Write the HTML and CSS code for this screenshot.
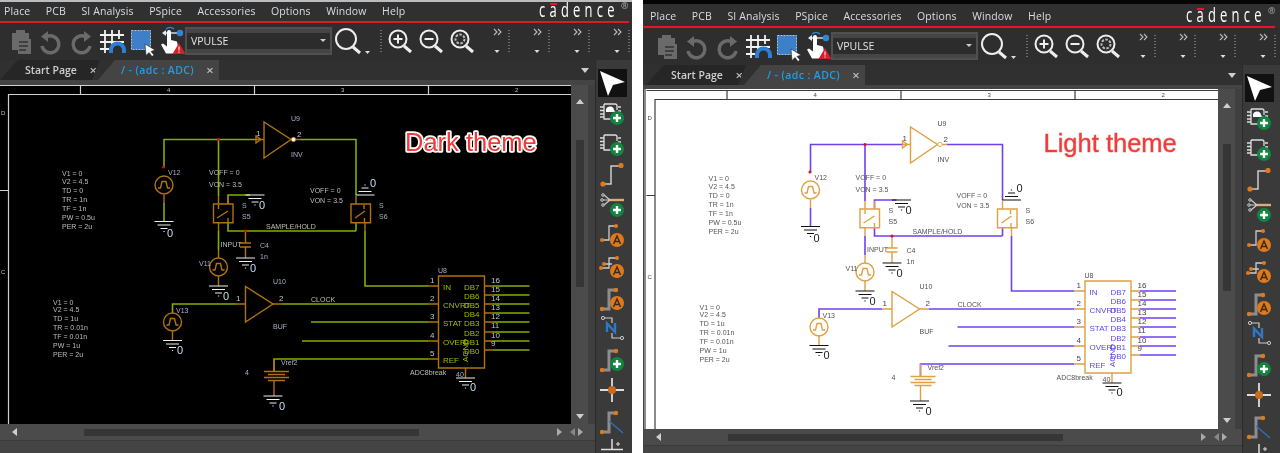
FILE: index.html
```html
<!DOCTYPE html>
<html lang="en">
<head>
<meta charset="utf-8">
<title>Cadence themes</title>
<link rel="stylesheet" href="styles.css">
</head>
<body>
<svg class="sprite" aria-hidden="true">
  <defs>
    <symbol id="i-clip" viewBox="0 0 30 37"><path class="ic-off" d="M6 10h4v-3h9v3h4v6h2v15h-13v-4h-6z"/><path d="M13 19h9M13 23h9M13 27h7" stroke="#333" stroke-width="1.600" fill="none"/></symbol>
    <symbol id="i-undo" viewBox="0 0 30 37"><path d="M11 13.500A8.500 8.500 0 1 1 6 23" class="ic-stroke"/><path class="ic-off" d="M12 8v11l-7-5.500z"/></symbol>
    <symbol id="i-redo" viewBox="0 0 30 37"><path d="M19 13.500A8.500 8.500 0 1 0 24 23" class="ic-stroke"/><path class="ic-off" d="M18 8v11l7-5.500z"/></symbol>
    <symbol id="i-grid" viewBox="0 0 30 37"><path d="M9 7v23M16 7v23M23 7v9M4 12h24M4 19h24M4 26h9" stroke="#f2f2f2" stroke-width="1.800" fill="none"/><path d="M15 30v-3a6.500 6.500 0 0 1 13 0v3" stroke="#2b7fd4" stroke-width="4" fill="none"/></symbol>
    <symbol id="i-sel" viewBox="0 0 30 37"><rect x="5.500" y="7.500" width="19" height="19" fill="#3d7fc9" stroke="#a9c9ea" stroke-dasharray="2 1"/><path d="M19 21l10 6-4 1.500 3 3.500-2 1.500-3-4-3 3z" fill="#fff" stroke="#222" stroke-width=".6"/></symbol>
    <symbol id="i-hand" viewBox="0 0 30 37"><path d="M8 10h14" stroke="#cfd8e0" stroke-width="1.500"/><path d="M6 10l4-3v6z" fill="#e6ebf0"/><circle cx="24" cy="10" r="3.200" fill="#2f86d8"/><path d="M10 6a6 6 0 0 1 8 0" stroke="#2f86d8" fill="none" stroke-width="1.300"/><path d="M11 9a2 2 0 0 1 4 0v8l6 1.500 1 5-3 7H10l-5-9 2-1 4 3z" fill="#fff"/><path d="M23 20l6.500 11h-13z" fill="#d81f2a"/><path d="M23 23.500v4M23 28.500v1.200" stroke="#fff"/></symbol>
    <symbol id="i-zoom" viewBox="0 0 52 37"><circle cx="14" cy="16" r="10" class="ic-lens"/><path d="M21 24l7 6" class="ic-handle"/><path d="M33 28h5l-2.500 3z" fill="#ddd"/><path d="M49 7v24" class="ic-grip"/></symbol>
    <symbol id="i-zin" viewBox="0 0 31 37"><circle cx="14" cy="16" r="8.500" class="ic-lens"/><path d="M20 23l7 6" class="ic-handle"/><path d="M9.500 16h9M14 11.500v9" stroke="#eee" stroke-width="2"/></symbol>
    <symbol id="i-zout" viewBox="0 0 31 37"><circle cx="14" cy="16" r="8.500" class="ic-lens"/><path d="M20 23l7 6" class="ic-handle"/><path d="M9.500 16h9" stroke="#eee" stroke-width="2"/></symbol>
    <symbol id="i-zfit" viewBox="0 0 31 37"><circle cx="14" cy="16" r="8.500" class="ic-lens"/><path d="M20 23l7 6" class="ic-handle"/><circle cx="14" cy="16" r="4.500" fill="none" stroke="#bbb" stroke-width="2" stroke-dasharray="2.500 1.500"/></symbol>
    <symbol id="i-more" viewBox="0 0 40 37"><path d="M17 6l3 3-3 3M21 6l3 3-3 3" fill="none" stroke="#bbb" stroke-width="1.100"/><path d="M17.500 27h5l-2.500 3z" fill="#ddd"/><path d="M32 7v24" class="ic-grip"/></symbol>

    <g id="plus"><circle r="7" fill="#11853f"/><path d="M-4 0h8M0-4v8" stroke="#fff" stroke-width="2.400"/></g>
    <g id="aa"><circle r="7" fill="#df7a1c"/><path d="M-3.500 4L0-4l3.500 8M-2.200 1.500h4.400" stroke="#3a2a16" stroke-width="1.500" fill="none"/></g>
    <g id="chip"><path d="M6 3h11q2 0 2 2v4M6 3v15h7" fill="none" stroke="#ddd" stroke-width="1.300"/><path d="M2 6h4M2 9.500h4M2 13h4M2 16h4M20 6h3M20 10h3" stroke="#ddd" stroke-width="1.500"/></g>
    <g id="bus"><path d="M4 23h7V4h6" fill="none" stroke="#8d8d8d" stroke-width="3"/><circle cx="4" cy="23" r="2.200" fill="#df7a1c"/><circle cx="18" cy="4" r="2.200" fill="#df7a1c"/></g>

    <symbol id="p-part" viewBox="0 0 30 31"><use href="#chip"/><path d="M8 10a4 4 0 0 1 8-1l2 2H8z" fill="#fff"/><use href="#plus" x="19" y="17"/></symbol>
    <symbol id="p-chip" viewBox="0 0 30 31"><use href="#chip"/><use href="#plus" x="19" y="17"/></symbol>
    <symbol id="p-wire" viewBox="0 0 30 31"><path d="M5 21h8V3h10" fill="none" stroke="#ccc" stroke-width="1.500"/><circle cx="5" cy="21" r="2.600" fill="#df7a1c"/><circle cx="23" cy="2.500" r="2.600" fill="#df7a1c"/></symbol>
    <symbol id="p-entry" viewBox="0 0 30 31"><path d="M12 7h14" stroke="#d8ad78" stroke-width="2.400"/><path d="M12 7L6 2M12 7H5M12 7l-6 5" stroke="#ccc" stroke-width="1.200"/><circle cx="5" cy="2" r="1.300" fill="none" stroke="#ccc"/><circle cx="4" cy="7" r="1.300" fill="none" stroke="#ccc"/><circle cx="5" cy="12" r="1.300" fill="none" stroke="#ccc"/><use href="#plus" x="19" y="17"/></symbol>
    <symbol id="p-net" viewBox="0 0 30 31"><path d="M4 16h7V2h7" fill="none" stroke="#ccc" stroke-width="1.300"/><circle cx="4" cy="16" r="2" fill="#df7a1c"/><circle cx="18" cy="2" r="2" fill="#df7a1c"/><use href="#aa" x="19" y="16"/></symbol>
    <symbol id="p-multi" viewBox="0 0 30 31"><path d="M3 13h8V3h8M6 9h8" fill="none" stroke="#ccc" stroke-width="1.300"/><circle cx="3" cy="13" r="2" fill="#df7a1c"/><circle cx="6" cy="9" r="2" fill="#df7a1c"/><circle cx="19" cy="3" r="2" fill="#df7a1c"/><use href="#aa" x="19" y="16"/></symbol>
    <symbol id="p-busa" viewBox="0 0 30 31"><use href="#bus"/><use href="#aa" x="19" y="17"/></symbol>
    <symbol id="p-name" viewBox="0 0 30 31"><path d="M6 2h8v5M14 17v5h8" fill="none" stroke="#ccc" stroke-width="1.200"/><circle cx="5" cy="2" r="1.600" fill="none" stroke="#ccc"/><circle cx="24" cy="22" r="1.600" fill="none" stroke="#ccc"/><path d="M9 16V7.500l8 8.500V7" fill="none" stroke="#2f78c8" stroke-width="2.400"/></symbol>
    <symbol id="p-busplus" viewBox="0 0 30 31"><use href="#bus"/><use href="#plus" x="19" y="17"/></symbol>
    <symbol id="p-junction" viewBox="0 0 30 31"><path d="M2 12h24M14 0v24" stroke="#ddd" stroke-width="1.800"/><circle cx="14" cy="12" r="4" fill="#c96c1d"/></symbol>
    <symbol id="p-busline" viewBox="0 0 30 31"><use href="#bus"/><path d="M11 12l14 12" stroke="#2f6fb8" stroke-width="1.400"/></symbol>
    <symbol id="p-gnd" viewBox="0 0 30 31"><path d="M14 0v10M3 10.500h22" stroke="#ddd" stroke-width="1.500"/><path d="M18 5h4M20 3v4" stroke="#ddd"/></symbol>

    <g id="gnd"><path d="M-9.500 0h19M-6.500 3.500h13M-3.500 7h7M-.6 10h1.200" class="s-gnd"/></g>
    <g id="src"><circle r="9" class="s-part"/><path d="M-6 3h2.500l1.500-6.500h4L3.500 3H6" class="s-part"/></g>

    <g id="art">
      <path d="M-1.500 80V424M0 85.500H600M8 94.500H600M8.500 94V424M0 190.500H8M80.500 85V94M254.500 85V94M428.500 85V94" class="s-rule"/>
      <path d="M164 167V139.500H256M218.500 139.500V196M300 139.500H356V195M228 204V195H250M228 222V231H356M356 222V231M218.500 231V250M164 203V221M365 231V286H428M172.500 313V304H236M282 304H428M311 322H428M302 341H428M274 371V359H428M493 286H529.500M493 295H529.500M493 304H529.500M493 313H529.500M493 322H529.500M493 332H529.500M493 341H529.500M493 350H529.500" class="s-wire"/>
      <path d="M264 122V158L291 139.500zM245.500 286.500V322L273 304zM213.500 204H233V222.700H213.500zM351 204H370.500V222.700H351zM438.500 276H484.500V368H438.500z" class="s-part"/>
      <path d="M256 139.500H264M291 139.500H300M218.500 196V204M228 196V204M218.500 222V231M356 196V204M365 222V231M164 195V203M172.500 331V340M236 304H245.500M273 304H282M218.500 250V258M218.500 276V286M245.500 231V243M245.500 247V258M240 243H251M240 247H251M428 286H438.500M428 304H438.500M428 322H438.500M428 341H438.500M428 359H438.500M484.500 286H493M484.500 295H493M484.500 304H493M484.500 313H493M484.500 322H493M484.500 332H493M484.500 341H493M484.500 350H493M465.500 368V378M274 359V371M264 371.500H289M268 374.500H285M264 377.500H289M268 380.500H285M274 381V396M218.500 209V205M217 218L228 211M228 222V218M364 209V205M355 218L365 211M364.500 218V222M256 136V143L261 139.500z" class="s-part"/>
      <use href="#src" x="164" y="185"/><use href="#src" x="218.500" y="267"/><use href="#src" x="172.500" y="322"/>
      <use href="#gnd" x="164" y="221.500"/><use href="#gnd" x="255" y="195"/><use href="#gnd" x="245.500" y="258"/><use href="#gnd" x="218.500" y="286"/><use href="#gnd" x="172.500" y="340.500"/><use href="#gnd" x="273" y="396"/><use href="#gnd" x="465.500" y="378"/>
      <use href="#gnd" transform="translate(365 195) scale(1 -1)"/>
      <circle cx="163.500" cy="167" r="1.500" class="s-dot"/><circle cx="218.500" cy="139.500" r="1.500" class="s-dot"/><circle cx="245.500" cy="231" r="1.500" class="s-dot"/>
      <circle cx="293.500" cy="139.500" r="2.200" class="s-bubble"/>
    </g>
  </defs>
</svg>

<section class="win dark">
  <nav class="menubar">
    <span>Place</span><span>PCB</span><span>SI Analysis</span><span>PSpice</span><span>Accessories</span><span>Options</span><span>Window</span><span>Help</span>
    <div class="logo"><svg class="logo-art" viewBox="0 0 90 22"><text class="logo-word" transform="scale(.65 1)" x="0" y="17">cadence</text><text class="logo-reg" x="82" y="9">®</text></svg></div>
  </nav>
  <div class="redline"></div>
  <div class="toolbar">
    <svg class="tb tb-30"><use href="#i-clip"/></svg><svg class="tb tb-30"><use href="#i-undo"/></svg><svg class="tb tb-30"><use href="#i-redo"/></svg><svg class="tb tb-30"><use href="#i-grid"/></svg><svg class="tb tb-30"><use href="#i-sel"/></svg><svg class="tb tb-30"><use href="#i-hand"/></svg>
    <div class="combo">VPULSE</div>
    <svg class="tb tb-52"><use href="#i-zoom"/></svg><svg class="tb tb-31"><use href="#i-zin"/></svg><svg class="tb tb-31"><use href="#i-zout"/></svg><svg class="tb tb-31"><use href="#i-zfit"/></svg>
    <svg class="tb tb-40"><use href="#i-more"/></svg><svg class="tb tb-40"><use href="#i-more"/></svg><svg class="tb tb-40"><use href="#i-more"/></svg><svg class="tb tb-40"><use href="#i-more"/></svg>
  </div>
  <div class="body">
    <div class="workspace">
      <div class="tabs">
        <div class="tab tab-off"><span>Start Page</span><b class="tab-x">×</b></div>
        <div class="tab tab-on"><span>/ - (adc : ADC)</span><b class="tab-x">×</b></div>
        <i class="tri tri-d tabs-menu"></i>
      </div>
      <div class="canvas-row">
        <svg class="canvas" viewBox="0 85 571 339">
          <use href="#art"/>
          <g class="t-rule"><text x="167" y="92">4</text><text x="341" y="92">3</text><text x="515" y="92">2</text><text x="1" y="115">D</text><text x="1" y="274">C</text></g>
          <g class="t-note"><text x="62" y="176">V1 = 0</text><text x="62" y="184">V2 = 4.5</text><text x="62" y="193">TD = 0</text><text x="62" y="202">TR = 1n</text><text x="62" y="211">TF = 1n</text><text x="62" y="220">PW = 0.5u</text><text x="62" y="229">PER = 2u</text><text x="53" y="305">V1 = 0</text><text x="53" y="312">V2 = 4.5</text><text x="53" y="321">TD = 1u</text><text x="53" y="330">TR = 0.01n</text><text x="53" y="339">TF = 0.01n</text><text x="53" y="348">PW = 1u</text><text x="53" y="357">PER = 2u</text><text x="209" y="175">VOFF = 0</text><text x="209" y="187">VON = 3.5</text><text x="310" y="193">VOFF = 0</text><text x="310" y="203">VON = 3.5</text><text x="266" y="229">SAMPLE/HOLD</text><text x="220.500" y="247">INPUT</text><text x="311" y="302">CLOCK</text><text x="410" y="375">ADC8break</text></g>
          <g class="t-ref"><text x="291" y="121">U9</text><text x="291" y="157">INV</text><text x="168" y="175">V12</text><text x="199" y="266">V11</text><text x="176" y="313">V13</text><text x="242" y="208">S</text><text x="242" y="219">S5</text><text x="379" y="208">S</text><text x="379" y="219">S6</text><text x="260" y="248">C4</text><text x="260" y="259">1n</text><text x="273" y="284">U10</text><text x="273" y="329">BUF</text><text x="281" y="365">Vref2</text><text x="245" y="375">4</text><text x="438" y="273">U8</text><text x="456" y="377">40</text></g>
          <g class="t-pin"><text x="256" y="136">1</text><text x="297" y="137">2</text><text x="236" y="301">1</text><text x="279" y="301">2</text><text x="430" y="283">1</text><text x="430" y="301">2</text><text x="430" y="319">3</text><text x="430" y="338">4</text><text x="430" y="356">5</text><text x="491" y="283">16</text><text x="491" y="292">15</text><text x="491" y="301">14</text><text x="491" y="310">13</text><text x="491" y="319">12</text><text x="491" y="328">11</text><text x="491" y="338">10</text><text x="491" y="346">9</text></g>
          <g class="t-zero"><text x="167" y="237">0</text><text x="259" y="209">0</text><text x="250" y="272">0</text><text x="223" y="300">0</text><text x="177" y="354">0</text><text x="279" y="410">0</text><text x="370" y="187">0</text><text x="470" y="391">0</text></g>
          <g class="t-port"><text x="443" y="290">IN</text><text x="443" y="308">CNVRT</text><text x="443" y="326">STAT</text><text x="443" y="345">OVER</text><text x="443" y="363">REF</text><text x="464" y="290">DB7</text><text x="464" y="299">DB6</text><text x="464" y="308">DB5</text><text x="464" y="317">DB4</text><text x="464" y="326">DB3</text><text x="464" y="336">DB2</text><text x="464" y="345">DB1</text><text x="464" y="354">DB0</text><text transform="translate(468 362) rotate(-90)">AGND</text></g>
          <text class="t-theme" x="405" y="151">Dark theme</text>
        </svg>
        <div class="vscroll"><i class="tri tri-u"></i><div class="vtrack"></div><i class="tri tri-d vdown"></i></div>
      </div>
      <div class="hscroll"><i class="tri tri-l"></i><div class="htrack"></div><i class="tri tri-r"></i><i class="tri tri-l2"></i><i class="tri tri-r2"></i></div>
    </div>
    <aside class="palette">
      <div class="pal-grip"></div>
      <div class="pal-select"><svg viewBox="0 0 29 28"><path d="M2 2l25 11-12 3-5 11z" fill="#fff"/></svg></div>
      <div class="pal-list">
        <svg><use href="#p-part"/></svg><svg><use href="#p-chip"/></svg><svg><use href="#p-wire"/></svg><svg><use href="#p-entry"/></svg><svg><use href="#p-net"/></svg><svg><use href="#p-multi"/></svg><svg><use href="#p-busa"/></svg><svg><use href="#p-name"/></svg><svg><use href="#p-busplus"/></svg><svg><use href="#p-junction"/></svg><svg><use href="#p-busline"/></svg><svg><use href="#p-gnd"/></svg>
      </div>
    </aside>
  </div>
</section>

<section class="win light">
  <nav class="menubar">
    <span>Place</span><span>PCB</span><span>SI Analysis</span><span>PSpice</span><span>Accessories</span><span>Options</span><span>Window</span><span>Help</span>
    <div class="logo"><svg class="logo-art" viewBox="0 0 90 22"><text class="logo-word" transform="scale(.65 1)" x="0" y="17">cadence</text><text class="logo-reg" x="82" y="9">®</text></svg></div>
  </nav>
  <div class="redline"></div>
  <div class="toolbar">
    <svg class="tb tb-30"><use href="#i-clip"/></svg><svg class="tb tb-30"><use href="#i-undo"/></svg><svg class="tb tb-30"><use href="#i-redo"/></svg><svg class="tb tb-30"><use href="#i-grid"/></svg><svg class="tb tb-30"><use href="#i-sel"/></svg><svg class="tb tb-30"><use href="#i-hand"/></svg>
    <div class="combo">VPULSE</div>
    <svg class="tb tb-52"><use href="#i-zoom"/></svg><svg class="tb tb-31"><use href="#i-zin"/></svg><svg class="tb tb-31"><use href="#i-zout"/></svg><svg class="tb tb-31"><use href="#i-zfit"/></svg>
    <svg class="tb tb-40"><use href="#i-more"/></svg><svg class="tb tb-40"><use href="#i-more"/></svg><svg class="tb tb-40"><use href="#i-more"/></svg><svg class="tb tb-40"><use href="#i-more"/></svg>
  </div>
  <div class="body">
    <div class="workspace">
      <div class="tabs">
        <div class="tab tab-off"><span>Start Page</span><b class="tab-x">×</b></div>
        <div class="tab tab-on"><span>/ - (adc : ADC)</span><b class="tab-x">×</b></div>
        <i class="tri tri-d tabs-menu"></i>
      </div>
      <div class="canvas-row">
        <svg class="canvas" viewBox="-2.500 84 574 340">
          <use href="#art"/>
          <g class="t-rule"><text x="167" y="92">4</text><text x="341" y="92">3</text><text x="515" y="92">2</text><text x="1" y="115">D</text><text x="1" y="274">C</text></g>
          <g class="t-note"><text x="62" y="176">V1 = 0</text><text x="62" y="184">V2 = 4.5</text><text x="62" y="193">TD = 0</text><text x="62" y="202">TR = 1n</text><text x="62" y="211">TF = 1n</text><text x="62" y="220">PW = 0.5u</text><text x="62" y="229">PER = 2u</text><text x="53" y="305">V1 = 0</text><text x="53" y="312">V2 = 4.5</text><text x="53" y="321">TD = 1u</text><text x="53" y="330">TR = 0.01n</text><text x="53" y="339">TF = 0.01n</text><text x="53" y="348">PW = 1u</text><text x="53" y="357">PER = 2u</text><text x="209" y="175">VOFF = 0</text><text x="209" y="187">VON = 3.5</text><text x="310" y="193">VOFF = 0</text><text x="310" y="203">VON = 3.5</text><text x="266" y="229">SAMPLE/HOLD</text><text x="220.500" y="247">INPUT</text><text x="311" y="302">CLOCK</text><text x="410" y="375">ADC8break</text></g>
          <g class="t-ref"><text x="291" y="121">U9</text><text x="291" y="157">INV</text><text x="168" y="175">V12</text><text x="199" y="266">V11</text><text x="176" y="313">V13</text><text x="242" y="208">S</text><text x="242" y="219">S5</text><text x="379" y="208">S</text><text x="379" y="219">S6</text><text x="260" y="248">C4</text><text x="260" y="259">1n</text><text x="273" y="284">U10</text><text x="273" y="329">BUF</text><text x="281" y="365">Vref2</text><text x="245" y="375">4</text><text x="438" y="273">U8</text><text x="456" y="377">40</text></g>
          <g class="t-pin"><text x="256" y="136">1</text><text x="297" y="137">2</text><text x="236" y="301">1</text><text x="279" y="301">2</text><text x="430" y="283">1</text><text x="430" y="301">2</text><text x="430" y="319">3</text><text x="430" y="338">4</text><text x="430" y="356">5</text><text x="491" y="283">16</text><text x="491" y="292">15</text><text x="491" y="301">14</text><text x="491" y="310">13</text><text x="491" y="319">12</text><text x="491" y="328">11</text><text x="491" y="338">10</text><text x="491" y="346">9</text></g>
          <g class="t-zero"><text x="167" y="237">0</text><text x="259" y="209">0</text><text x="250" y="272">0</text><text x="223" y="300">0</text><text x="177" y="354">0</text><text x="279" y="410">0</text><text x="370" y="187">0</text><text x="470" y="391">0</text></g>
          <g class="t-port"><text x="443" y="290">IN</text><text x="443" y="308">CNVRT</text><text x="443" y="326">STAT</text><text x="443" y="345">OVER</text><text x="443" y="363">REF</text><text x="464" y="290">DB7</text><text x="464" y="299">DB6</text><text x="464" y="308">DB5</text><text x="464" y="317">DB4</text><text x="464" y="326">DB3</text><text x="464" y="336">DB2</text><text x="464" y="345">DB1</text><text x="464" y="354">DB0</text><text transform="translate(468 362) rotate(-90)">AGND</text></g>
          <text class="t-theme" x="397" y="146.500">Light theme</text>
        </svg>
        <div class="vscroll"><i class="tri tri-u"></i><div class="vtrack"></div><i class="tri tri-d vdown"></i></div>
      </div>
      <div class="hscroll"><i class="tri tri-l"></i><div class="htrack"></div><i class="tri tri-r"></i><i class="tri tri-l2"></i><i class="tri tri-r2"></i></div>
    </div>
    <aside class="palette">
      <div class="pal-grip"></div>
      <div class="pal-select"><svg viewBox="0 0 29 28"><path d="M2 2l25 11-12 3-5 11z" fill="#fff"/></svg></div>
      <div class="pal-list">
        <svg><use href="#p-part"/></svg><svg><use href="#p-chip"/></svg><svg><use href="#p-wire"/></svg><svg><use href="#p-entry"/></svg><svg><use href="#p-net"/></svg><svg><use href="#p-multi"/></svg><svg><use href="#p-busa"/></svg><svg><use href="#p-name"/></svg><svg><use href="#p-busplus"/></svg><svg><use href="#p-junction"/></svg><svg><use href="#p-busline"/></svg><svg><use href="#p-gnd"/></svg>
      </div>
    </aside>
  </div>
</section>
</body>
</html>
```
FILE: styles.css
```css
* { box-sizing: border-box; }
html, body { margin: 0; height: 453px; overflow: hidden; }
body {
  display: flex;
  gap: 11px;
  background: #fff;
  font-family: "Open Sans", "Liberation Sans", sans-serif;
}
.sprite { position: absolute; width: 0; height: 0; }

.win {
  display: flex;
  flex-direction: column;
  height: 453px;
  overflow: hidden;
  background: #303030;
  color: #d8dde2;
  filter: blur(.35px);
}
.dark {
  width: 632px;
  border-top: 2px solid #bcbcbc;
  --inset: 0px;
  --canvas-gap: 0px;
  --canvas-top: 5px;
  --canvas-w: 571px;
  --canvas-h: 339px;
  --workspace: 595px;
  --canvas-bg: #000;
  --wire: #84ad00;
  --part: #b0720f;
  --gnd: #f0f0f0;
  --rule: #d0d0d0;
  --note: #bdbdbd;
  --ref: #a4b2c6;
  --pin: #b8c4d0;
  --zero: #c4def5;
  --port: #a4bb00;
  --bubble: #fff;
  --redline-end: 3px;
  --logo-right: 3px;
  --theme-stroke: #fff;
  --theme-width: 3.500px;
}
.light {
  flex: 1;
  border-top: 4px solid #050505;
  padding-top: 3px;
  --inset: 3px;
  --canvas-gap: 1px;
  --canvas-top: 4px;
  --canvas-w: 574px;
  --canvas-h: 340px;
  --workspace: 599px;
  --canvas-bg: #fff;
  --wire: #7040f0;
  --part: #dda043;
  --gnd: #111;
  --rule: #3c3c3c;
  --note: #555;
  --ref: #505050;
  --pin: #444;
  --zero: #222;
  --port: #5e48ea;
  --bubble: #fff;
  --redline-end: 5px;
  --logo-right: 4px;
  --theme-stroke: #eeb0a8;
  --theme-width: 1px;
}

.menubar {
  position: relative;
  display: flex;
  align-items: center;
  gap: 15.500px;
  height: 18.500px;
  padding-left: calc(4px + var(--inset));
  font-size: 10.500px;
  letter-spacing: .12px;
  background: #303030;
}
.logo {
  position: absolute;
  right: var(--logo-right);
  top: -2px;
  width: 90px;
  height: 22px;
}
.logo-art { display: block; width: 90px; height: 22px; overflow: visible; }
.logo-word {
  font-size: 20px;
  letter-spacing: 6.500px;
  fill: #fff;
}
.logo-reg {
  font-size: 9px;
  fill: #aaa;
}
.logo::before {
  content: "";
  position: absolute;
  left: 11px;
  top: 3px;
  width: 7px;
  height: 2px;
  background: #e0182d;
}
.redline {
  position: relative;
  height: 2px;
  margin-right: var(--redline-end);
  background: #e0182d;
}

.toolbar {
  display: flex;
  align-items: stretch;
  height: 37.500px;
  padding-left: calc(6px + var(--inset));
  background: #2e2e2e;
}
.tb { display: block; flex: none; height: 37px; }
.tb-30 { width: 30px; }
.tb-31 { width: 31px; }
.tb-40 { width: 40px; }
.tb-52 { width: 52px; }
.ic-off { fill: #6a6a6a; }
.ic-stroke { fill: none; stroke: #6a6a6a; stroke-width: 3.500; }
.ic-lens { fill: none; stroke: #eee; stroke-width: 2; }
.ic-handle { stroke: #eee; stroke-width: 3; }
.ic-grip { stroke: #6c6c6c; stroke-width: 2; stroke-dasharray: 1 2; }
.combo {
  position: relative;
  flex: none;
  align-self: center;
  width: 147px;
  height: 28px;
  margin-left: -1px;
  padding-left: 4px;
  border: 2px solid #505050;
  font-size: 10.500px;
  line-height: 24px;
  color: #e4e4e4;
  background: linear-gradient(#454545 0 4px, #2c2c2c 4px 20px, #454545 20px);
}
.combo::after {
  content: "";
  position: absolute;
  right: 4px;
  top: 10px;
  border: 3px solid transparent;
  border-top: 3px solid #ccc;
}

.body { flex: 1; min-height: 0; display: flex; }
.workspace {
  flex: none;
  width: var(--workspace);
  display: flex;
  flex-direction: column;
  background: #444;
}
.tabs {
  position: relative;
  display: flex;
  height: 20px;
  flex: none;
  padding-left: var(--inset);
  background: #303030;
}
.tab {
  display: flex;
  align-items: center;
  height: 20px;
  font-size: 10.500px;
  font-weight: 600;
}
.tab-off {
  width: 100px;
  padding-left: 25px;
  color: #cfcfcf;
  background: #262626;
  clip-path: polygon(0 100%, 18px 0, 100% 0, 92% 100%);
}
.tab-on {
  width: 121px;
  margin-left: -2px;
  padding-left: 23px;
  letter-spacing: .4px;
  color: #1e9fe8;
  background: #444;
  clip-path: polygon(0 100%, 17px 0, 100% 0, 100% 100%);
}
.tab-x {
  margin-left: auto;
  margin-right: 3px;
  font-size: 13px;
  font-weight: 600;
  color: #bdbdbd;
}
.tab-on .tab-x { margin-right: 5px; }
.tabs-menu { position: absolute; right: 6px; top: 8px; }

.canvas-row {
  display: flex;
  flex: none;
  padding-top: var(--canvas-top);
  padding-left: var(--canvas-gap);
}
.canvas {
  display: block;
  flex: none;
  width: var(--canvas-w);
  height: var(--canvas-h);
  background: var(--canvas-bg);
}
.vscroll {
  flex: 1;
  display: flex;
  flex-direction: column;
  align-items: flex-start;
  padding: 14px 0 0 5px;
  background: linear-gradient(90deg, #4b4b4b 0 17px, #3f3f3f 17px);
}
.vtrack {
  width: 8px;
  height: 147px;
  margin-top: 36px;
  background: #363636;
}
.vdown { margin: 127px 0 0 0; }

.tri { display: block; flex: none; width: 0; height: 0; border: 4px solid transparent; }
.tri-u { border-top: 0; border-bottom: 5px solid #cfcfcf; }
.tri-d { border-bottom: 0; border-top: 5px solid #cfcfcf; }
.tri-l { border-left: 0; border-right: 5px solid #cfcfcf; }
.tri-r { border-right: 0; border-left: 5px solid #aaa; }
.tri-l2 { border-left: 0; border-right: 5px solid #888; margin-left: 8px; }
.tri-r2 { border-right: 0; border-left: 5px solid #aaa; margin-left: 3px; }

.hscroll {
  display: flex;
  align-items: center;
  flex: none;
  height: 17px;
  margin-left: var(--canvas-gap);
  padding-left: 12px;
  background: #4b4b4b;
  border-bottom: 1px solid #3a3a3a;
}
.htrack {
  width: 335px;
  height: 7px;
  margin: 0 138px 0 67px;
  background: #363636;
}

.palette {
  flex: 1;
  display: flex;
  flex-direction: column;
  padding: 3px 0 0 2px;
  background: #3a3a3a;
  border-left: 1px solid #2a2a2a;
}
.pal-grip {
  width: 22px;
  height: 2px;
  margin: 0 0 6px 3px;
  background: repeating-linear-gradient(90deg, #7a7a7a 0 2px, transparent 2px 4px);
}
.pal-select {
  width: 29px;
  height: 28px;
  margin-bottom: 4px;
  background: #111;
}
.pal-select svg { display: block; width: 29px; height: 28px; }
.pal-list {
  display: grid;
  grid-auto-rows: 30.750px;
}
.pal-list svg { display: block; width: 30px; height: 31px; }

.s-rule { fill: none; stroke: var(--rule); stroke-width: 1.200; }
.s-wire { fill: none; stroke: var(--wire); stroke-width: 1.600; }
.s-part { fill: none; stroke: var(--part); stroke-width: 1.400; }
.s-gnd { fill: none; stroke: var(--gnd); stroke-width: 1.200; }
.s-dot { fill: #e01010; }
.s-bubble { fill: var(--bubble); stroke: var(--part); stroke-width: .8; }

.canvas text { font-family: "Liberation Sans", Arial, sans-serif; }
.t-rule text { font-size: 6px; fill: var(--pin); }
.t-note text { font-size: 7px; fill: var(--note); }
.t-ref text { font-size: 7px; fill: var(--ref); }
.t-pin text { font-size: 8px; fill: var(--pin); }
.t-zero text { font-size: 11px; fill: var(--zero); }
.t-port text { font-size: 8px; fill: var(--port); }
.canvas .t-theme {
  font-size: 25.500px;
  fill: #f23a3a;
  stroke: var(--theme-stroke);
  stroke-width: var(--theme-width);
  stroke-linejoin: round;
  paint-order: stroke;
}
```
